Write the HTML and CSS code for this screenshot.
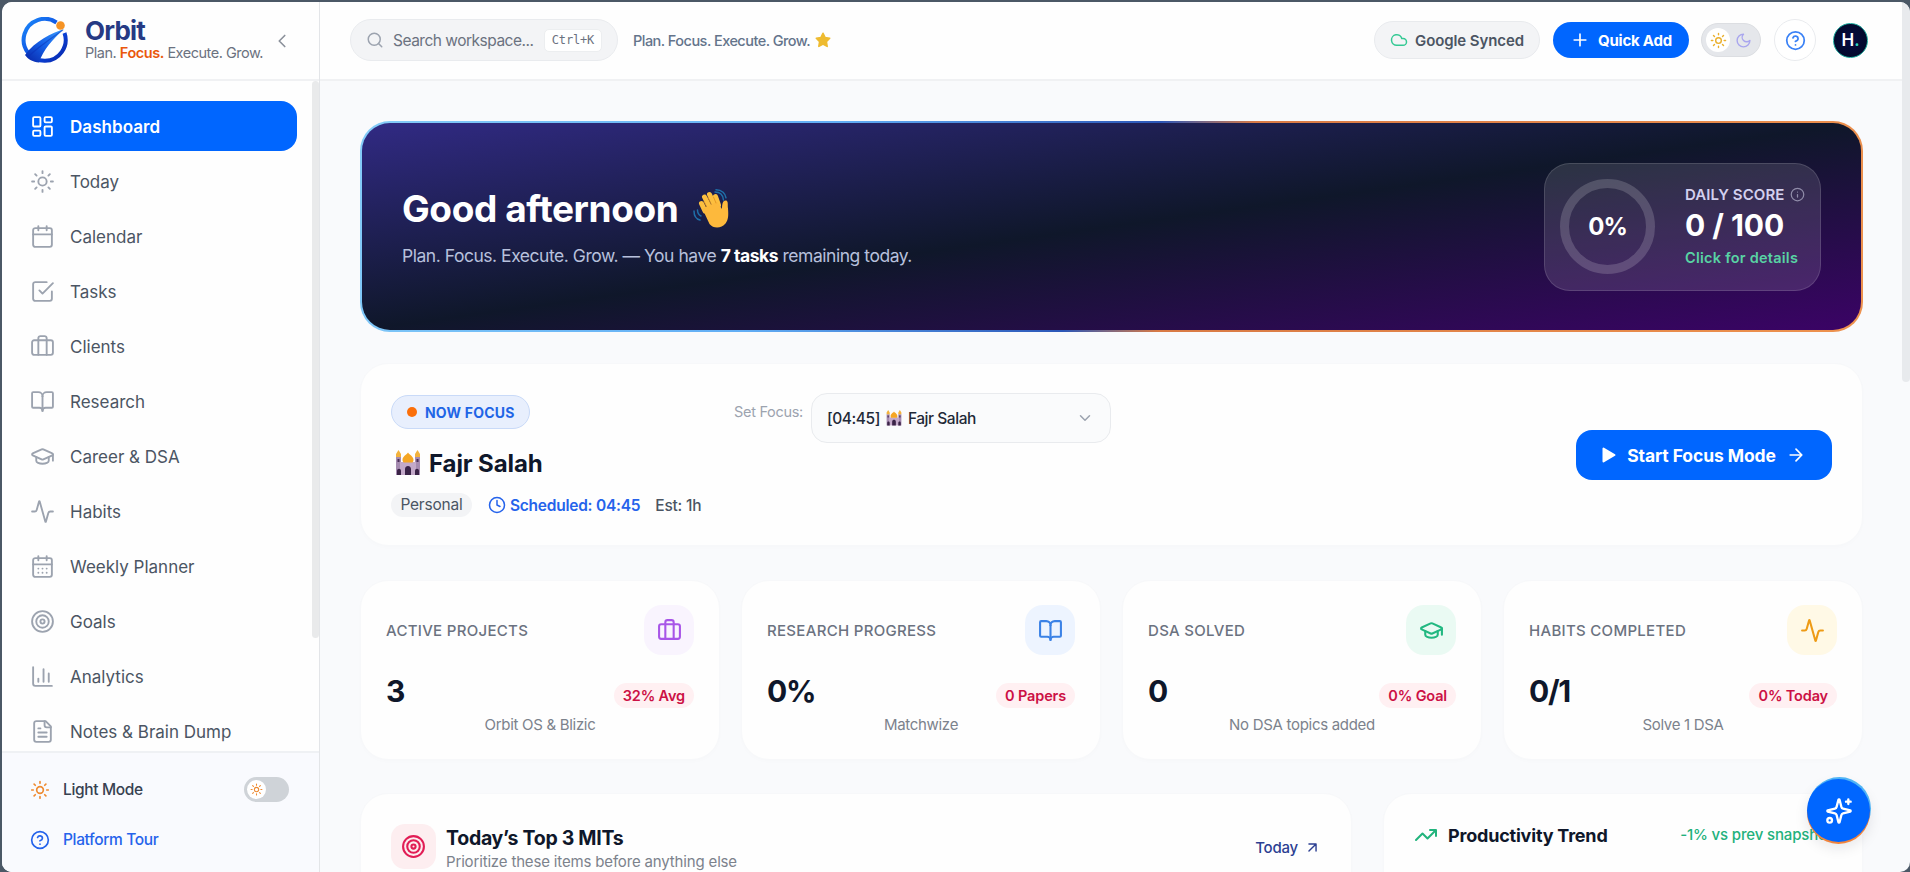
FILE: index.html
```html
<!DOCTYPE html>
<html lang="en">
<head>
    <meta charset="UTF-8">
    <title>Orbit</title>
    <link rel="stylesheet" href="styles.css">
</head>
<body>
    <!-- icons -->
    <svg class="sprite">
        <symbol id="dashboard" viewBox="0 0 24 24"><rect x="3" y="3" width="7" height="9" rx="1"/><rect x="14" y="3" width="7" height="5" rx="1"/><rect x="14" y="12" width="7" height="9" rx="1"/><rect x="3" y="16" width="7" height="5" rx="1"/></symbol>
        <symbol id="sun" viewBox="0 0 24 24"><circle cx="12" cy="12" r="4"/><path d="M12 2v2M12 20v2M4.93 4.93l1.41 1.41M17.66 17.66l1.41 1.41M2 12h2M20 12h2M6.34 17.66l-1.41 1.41M19.07 4.93l-1.41 1.41"/></symbol>
        <symbol id="calendar" viewBox="0 0 24 24"><path d="M8 2v4M16 2v4M3 10h18"/><rect x="3" y="4" width="18" height="18" rx="2"/></symbol>
        <symbol id="planner" viewBox="0 0 24 24"><path d="M8 2v4M16 2v4M3 10h18M8 14h.01M12 14h.01M16 14h.01M8 18h.01M12 18h.01M16 18h.01"/><rect x="3" y="4" width="18" height="18" rx="2"/></symbol>
        <symbol id="check" viewBox="0 0 24 24"><path d="m9 11 3 3L22 4"/><path d="M21 12v7a2 2 0 0 1-2 2H5a2 2 0 0 1-2-2V5a2 2 0 0 1 2-2h11"/></symbol>
        <symbol id="briefcase" viewBox="0 0 24 24"><path d="M16 20V4a2 2 0 0 0-2-2h-4a2 2 0 0 0-2 2v16"/><rect x="2" y="6" width="20" height="14" rx="2"/></symbol>
        <symbol id="book" viewBox="0 0 24 24"><path d="M12 7v14"/><path d="M3 18a1 1 0 0 1-1-1V4a1 1 0 0 1 1-1h5a4 4 0 0 1 4 4 4 4 0 0 1 4-4h5a1 1 0 0 1 1 1v13a1 1 0 0 1-1 1h-6a3 3 0 0 0-3 3 3 3 0 0 0-3-3z"/></symbol>
        <symbol id="cap" viewBox="0 0 24 24"><path d="M21.42 10.922a1 1 0 0 0-.019-1.838L12.83 5.18a2 2 0 0 0-1.66 0L2.6 9.08a1 1 0 0 0 0 1.832l8.57 3.908a2 2 0 0 0 1.66 0z"/><path d="M22 10v6M6 12.5V16a6 3 0 0 0 12 0v-3.5"/></symbol>
        <symbol id="activity" viewBox="0 0 24 24"><path d="M22 12h-2.48a2 2 0 0 0-1.93 1.46l-2.35 8.36a.25.25 0 0 1-.48 0L9.24 2.18a.25.25 0 0 0-.48 0l-2.35 8.36A2 2 0 0 1 4.49 12H2"/></symbol>
        <symbol id="target" viewBox="0 0 24 24"><circle cx="12" cy="12" r="10"/><circle cx="12" cy="12" r="6"/><circle cx="12" cy="12" r="2"/></symbol>
        <symbol id="chart" viewBox="0 0 24 24"><path d="M3 3v16a2 2 0 0 0 2 2h16M18 17V9M13 17V5M8 17v-3"/></symbol>
        <symbol id="file" viewBox="0 0 24 24"><path d="M15 2H6a2 2 0 0 0-2 2v16a2 2 0 0 0 2 2h12a2 2 0 0 0 2-2V7Z"/><path d="M14 2v4a2 2 0 0 0 2 2h4M10 9H8M16 13H8M16 17H8"/></symbol>
        <symbol id="help" viewBox="0 0 24 24"><circle cx="12" cy="12" r="10"/><path d="M9.09 9a3 3 0 0 1 5.83 1c0 2-3 3-3 3M12 17h.01"/></symbol>
        <symbol id="info" viewBox="0 0 24 24"><circle cx="12" cy="12" r="10"/><path d="M12 16v-4M12 8h.01"/></symbol>
        <symbol id="search" viewBox="0 0 24 24"><circle cx="11" cy="11" r="8"/><path d="m21 21-4.3-4.3"/></symbol>
        <symbol id="cloud" viewBox="0 0 24 24"><path d="M17.5 19H9a7 7 0 1 1 6.71-9h1.79a4.5 4.5 0 1 1 0 9Z"/></symbol>
        <symbol id="plus" viewBox="0 0 24 24"><path d="M5 12h14M12 5v14"/></symbol>
        <symbol id="moon" viewBox="0 0 24 24"><path d="M12 3a6 6 0 0 0 9 9 9 9 0 1 1-9-9Z"/></symbol>
        <symbol id="clock" viewBox="0 0 24 24"><circle cx="12" cy="12" r="10"/><path d="M12 6v6l4 2"/></symbol>
        <symbol id="left" viewBox="0 0 24 24"><path d="m15 18-6-6 6-6"/></symbol>
        <symbol id="down" viewBox="0 0 24 24"><path d="m6 9 6 6 6-6"/></symbol>
        <symbol id="right" viewBox="0 0 24 24"><path d="M5 12h14M12 5l7 7-7 7"/></symbol>
        <symbol id="upright" viewBox="0 0 24 24"><path d="M7 7h10v10M7 17 17 7"/></symbol>
        <symbol id="trend" viewBox="0 0 24 24"><path d="m22 7-8.5 8.5-5-5L2 17M16 7h6v6"/></symbol>
        <symbol id="sparkles" viewBox="0 0 24 24"><path d="M9.937 15.5A2 2 0 0 0 8.5 14.063l-6.135-1.582a.5.5 0 0 1 0-.962L8.5 9.936A2 2 0 0 0 9.937 8.5l1.582-6.135a.5.5 0 0 1 .963 0L14.063 8.5A2 2 0 0 0 15.5 9.937l6.135 1.581a.5.5 0 0 1 0 .964L15.5 14.063a2 2 0 0 0-1.437 1.437l-1.582 6.135a.5.5 0 0 1-.963 0z"/><path d="M20 2v4M22 4h-4"/><circle cx="4" cy="20" r="2"/></symbol>
        <symbol id="mosque" viewBox="0 0 26 26">
            <path d="M1 7h5v18H1zM20 7h5v18h-5z" fill="#a58bb0"/>
            <path d="M5 12h16v13H5z" fill="#c3a9c9"/>
            <path d="M3.500 0 6 4v3H1V4zM22.500 0 25 4v3h-5V4z" fill="#f3b23c"/>
            <path d="M13 2.500c1 2 5.500 3.500 5.500 7.500 0 1.500-1 2.500-1 2.500h-9s-1-1-1-2.500c0-4 4.500-5.500 5.500-7.500z" fill="#f5a623"/>
            <path d="M2 25v-4c0-3 4-3 4 0v4zM20 25v-4c0-3 4-3 4 0v4zM10 25v-6c0-4 6-4 6 0v6z" fill="#3a2347"/>
            <path d="M2.500 9h2v3h-2zM21.500 9h2v3h-2z" fill="#4a2f58"/>
        </symbol>
    </svg>

    <div class="app">
        <aside class="sidebar">
            <div class="brand">
                <svg class="logo" viewBox="0 0 48 48">
                    <defs>
                        <linearGradient id="lg" x1="0" y1="0" x2="1" y2="1"><stop offset="0" stop-color="#1d8bfb"/><stop offset="0.600" stop-color="#0b45dd"/><stop offset="1" stop-color="#0826a8"/></linearGradient>
                        <linearGradient id="lt" x1="1" y1="0" x2="0" y2="1"><stop offset="0" stop-color="#3ba0ff"/><stop offset="0.500" stop-color="#1560e8"/><stop offset="1" stop-color="#0824a6"/></linearGradient>
                    </defs>
                    <path d="M35.500 5.500A21 21 0 1 0 43.500 16" fill="none" stroke="url(#lg)" stroke-width="4"/>
                    <path d="M43 12C31 16 14 24 4 38c3 4.500 8 7 14 7.500C22 33 32 22 43 12z" fill="url(#lt)"/>
                    <path d="M42 13C31 21 17 30 7 40" fill="none" stroke="#0a2fb8" stroke-width="1.200" opacity=".5"/>
                    <circle cx="39.500" cy="8.500" r="4.300" fill="#f59324"/>
                </svg>
                <div class="brand-text">
                    <div class="brand-name">Orbit</div>
                    <div class="brand-tag">Plan. <b>Focus.</b> Execute. Grow.</div>
                </div>
                <svg class="icon collapse"><use href="#left"/></svg>
            </div>
            <nav class="nav">
                <a class="active"><svg class="icon"><use href="#dashboard"/></svg>Dashboard</a>
                <a><svg class="icon"><use href="#sun"/></svg>Today</a>
                <a><svg class="icon"><use href="#calendar"/></svg>Calendar</a>
                <a><svg class="icon"><use href="#check"/></svg>Tasks</a>
                <a><svg class="icon"><use href="#briefcase"/></svg>Clients</a>
                <a><svg class="icon"><use href="#book"/></svg>Research</a>
                <a><svg class="icon"><use href="#cap"/></svg>Career &amp; DSA</a>
                <a><svg class="icon"><use href="#activity"/></svg>Habits</a>
                <a><svg class="icon"><use href="#planner"/></svg>Weekly Planner</a>
                <a><svg class="icon"><use href="#target"/></svg>Goals</a>
                <a><svg class="icon"><use href="#chart"/></svg>Analytics</a>
                <a><svg class="icon"><use href="#file"/></svg>Notes &amp; Brain Dump</a>
                <span class="nav-scroll"></span>
            </nav>
            <div class="side-foot">
                <div class="mode">
                    <svg class="icon orange"><use href="#sun"/></svg>
                    <span>Light Mode</span>
                    <div class="switch"><div class="knob"><svg class="icon orange"><use href="#sun"/></svg></div></div>
                </div>
                <div class="tour"><svg class="icon"><use href="#help"/></svg><span>Platform Tour</span></div>
            </div>
        </aside>

        <div class="page">
            <header class="topbar">
                <div class="search">
                    <svg class="icon"><use href="#search"/></svg>
                    <span>Search workspace...</span>
                    <kbd>Ctrl+K</kbd>
                </div>
                <div class="tagline">Plan. Focus. Execute. Grow.</div>
                <svg class="star" viewBox="0 0 24 24"><path d="m12 2 3.100 6.500 6.900.9-5 4.900 1.200 7.200L12 18.200l-6.200 3.300L7 14.300 2 9.400l6.900-.9z" fill="#eebb30" stroke="#eebb30" stroke-width="2.500" stroke-linejoin="round"/></svg>
                <div class="synced"><svg class="icon"><use href="#cloud"/></svg>Google Synced</div>
                <button class="quick"><svg class="icon"><use href="#plus"/></svg>Quick Add</button>
                <div class="theme">
                    <div class="theme-on"><svg class="icon"><use href="#sun"/></svg></div>
                    <svg class="icon moon"><use href="#moon"/></svg>
                </div>
                <div class="help"><svg class="icon"><use href="#help"/></svg></div>
                <div class="avatar">H<i>.</i></div>
            </header>

            <main class="content">
                <section class="hero">
                    <div class="hero-text">
                        <h1>Good afternoon
                            <svg class="wave" viewBox="0 0 38 40">
                                <g fill="none" stroke="#1f6fa8" stroke-width="1.500" stroke-linecap="round"><path d="M2 22c0 5 2 8 6 9M5.500 21c0 3 1.500 5 3.500 6M23 3c5 0 8 3 8.500 8M24 .8c6 0 9.500 4 10 8"/></g>
                                <path d="M13 22 9.500 14.500M17 17 12.500 8M22 15 17.500 5.500M26.500 16 23.500 7.500" fill="none" stroke="#fdbf3f" stroke-width="5" stroke-linecap="round"/>
                                <path d="M10.500 20 25 12.500l5 7.500c0-4 .5-9 4-8.500 2.500.5 1.500 4 2 8 .5 7 .5 11-2.500 15-4 5-12 5.500-16 .5z" fill="#fdb93c"/>
                                <path d="m14.500 17.500-2.500-5M19 15l-3-6.500M24 14l-2.500-6" fill="none" stroke="#e08f1f" stroke-width=".8" stroke-linecap="round"/>
                            </svg>
                        </h1>
                        <p>Plan. Focus. Execute. Grow. — You have <b>7 tasks</b> remaining today.</p>
                    </div>
                    <div class="score">
                        <div class="ring">0%</div>
                        <div class="score-text">
                            <div class="score-label">DAILY SCORE <svg class="icon"><use href="#info"/></svg></div>
                            <div class="score-value">0 / 100</div>
                            <div class="score-link">Click for details</div>
                        </div>
                    </div>
                </section>

                <section class="card focus">
                    <div class="focus-left">
                        <div class="now"><i></i>NOW FOCUS</div>
                        <div class="focus-title"><svg class="mosque"><use href="#mosque"/></svg>Fajr Salah</div>
                        <div class="focus-meta">
                            <span class="chip">Personal</span>
                            <span class="sched"><svg class="icon"><use href="#clock"/></svg>Scheduled: 04:45</span>
                            <span class="est">Est: 1h</span>
                        </div>
                    </div>
                    <div class="set-focus">
                        <label>Set Focus:</label>
                        <div class="select"><span>[04:45]</span><svg class="mosque"><use href="#mosque"/></svg><span>Fajr Salah</span><svg class="icon"><use href="#down"/></svg></div>
                    </div>
                    <button class="start"><svg class="play" viewBox="0 0 14 16"><path d="M1.500 1.500v13L12.500 8z" fill="#fff" stroke="#fff" stroke-width="2" stroke-linejoin="round"/></svg><span>Start Focus Mode</span><svg class="icon"><use href="#right"/></svg></button>
                </section>

                <section class="stats">
                    <div class="card stat">
                        <div class="stat-head"><h3>ACTIVE PROJECTS</h3><div class="tile purple"><svg class="icon"><use href="#briefcase"/></svg></div></div>
                        <div class="stat-row"><strong>3</strong><span class="pill">32% Avg</span></div>
                        <p>Orbit OS &amp; Blizic</p>
                    </div>
                    <div class="card stat">
                        <div class="stat-head"><h3>RESEARCH PROGRESS</h3><div class="tile blue"><svg class="icon"><use href="#book"/></svg></div></div>
                        <div class="stat-row"><strong>0%</strong><span class="pill">0 Papers</span></div>
                        <p>Matchwize</p>
                    </div>
                    <div class="card stat">
                        <div class="stat-head"><h3>DSA SOLVED</h3><div class="tile green"><svg class="icon"><use href="#cap"/></svg></div></div>
                        <div class="stat-row"><strong>0</strong><span class="pill">0% Goal</span></div>
                        <p>No DSA topics added</p>
                    </div>
                    <div class="card stat">
                        <div class="stat-head"><h3>HABITS COMPLETED</h3><div class="tile amber"><svg class="icon"><use href="#activity"/></svg></div></div>
                        <div class="stat-row"><strong>0/1</strong><span class="pill">0% Today</span></div>
                        <p>Solve 1 DSA</p>
                    </div>
                </section>

                <section class="bottom">
                    <div class="card mits">
                        <div class="tile red"><svg class="icon"><use href="#target"/></svg></div>
                        <div class="mits-text">
                            <h2>Today’s Top 3 MITs</h2>
                            <p>Prioritize these items before anything else</p>
                        </div>
                        <a class="today">Today <svg class="icon"><use href="#upright"/></svg></a>
                    </div>
                    <div class="card trend">
                        <svg class="icon"><use href="#trend"/></svg>
                        <h2>Productivity Trend</h2>
                        <span>-1% vs prev snapshot</span>
                    </div>
                </section>
            </main>
        </div>
        <div class="page-scroll"></div>
        <div class="fab"><svg class="icon"><use href="#sparkles"/></svg></div>
    </div>
</body>
</html>
```

FILE: styles.css
```css
*{
    box-sizing: border-box;
}
body{
    margin: 0;
    height: 872px;
    overflow: hidden;
    padding: 2px 0 0 2px;
    background: #4b5866;
    font-family: Inter, "Liberation Sans", sans-serif;
    color: #0f172a;
}
h1, h2, h3, p{
    margin: 0;
}
button{
    border: 0;
    font-family: inherit;
}
.sprite{
    position: absolute;
    width: 0;
    height: 0;
}
.icon{
    width: 24px;
    height: 24px;
    flex: none;
    fill: none;
    stroke: currentColor;
    stroke-width: 2;
    stroke-linecap: round;
    stroke-linejoin: round;
}
.app{
    position: relative;
    display: flex;
    height: 870px;
    border-radius: 10px;
    overflow: hidden;
    background: #f9fafc;
}

/* sidebar */
.sidebar{
    width: 318px;
    flex: none;
    display: flex;
    flex-direction: column;
    background: #fefefe;
    border-right: 1px solid #e3e5e8;
}
.brand{
    height: 79px;
    flex: none;
    display: flex;
    align-items: center;
    padding: 0 26px 0 19px;
    border-bottom: 2px solid #f0f1f3;
}
.logo{
    width: 48px;
    height: 48px;
    margin-right: 16px;
}
.brand-text{
    flex: 1;
    padding-bottom: 5px;
}
.brand-name{
    font-size: 26px;
    line-height: 29px;
    font-weight: 700;
    letter-spacing: -0.8px;
    color: #263a84;
}
.brand-tag{
    font-size: 14.5px;
    line-height: 16px;
    letter-spacing: -0.48px;
    white-space: nowrap;
    color: #6b7280;
}
.brand-tag b{
    font-weight: 600;
    color: #ea580c;
}
.collapse{
    width: 22px;
    height: 22px;
    color: #8b919b;
    stroke-width: 1.8;
}
.nav{
    position: relative;
    flex: 1;
    min-height: 0;
    overflow: hidden;
    padding: 20px 22px 0 13px;
    display: flex;
    flex-direction: column;
    gap: 5px;
}
.nav a{
    height: 50px;
    flex: none;
    display: flex;
    align-items: center;
    gap: 15px;
    padding: 1px 0 0 15px;
    border-radius: 16px;
    font-size: 17px;
    letter-spacing: 0;
    color: #4b5563;
}
.nav a .icon{
    width: 25px;
    height: 25px;
    color: #9ca3af;
    stroke-width: 1.8;
}
.nav .active{
    background: #0066ff;
    color: #fff;
    font-weight: 600;
    letter-spacing: 0.05px;
}
.nav .active .icon{
    color: #fff;
}
.nav-scroll{
    position: absolute;
    top: 0;
    right: 0;
    width: 7px;
    height: 557px;
    border-radius: 4px;
    background: #e9eaeb;
}
.side-foot{
    height: 121px;
    flex: none;
    padding: 24px 30px 0 28px;
    border-top: 2px solid #eff1f4;
    background: #f9fafe;
    font-size: 15.5px;
    font-weight: 500;
    letter-spacing: -0.35px;
}
.mode, .tour{
    display: flex;
    align-items: center;
    height: 25px;
    color: #374151;
}
.mode span, .tour span{
    margin-left: 13px;
}
.side-foot .icon{
    width: 20px;
    height: 20px;
}
.side-foot .orange{
    color: #ee8a30;
}
.switch{
    width: 45px;
    height: 25px;
    margin-left: auto;
    padding: 3px;
    border-radius: 13px;
    background: #cfd3d8;
}
.knob{
    width: 19px;
    height: 19px;
    display: flex;
    align-items: center;
    justify-content: center;
    border-radius: 50%;
    background: #fff;
}
.side-foot .knob .icon{
    width: 13px;
    height: 13px;
}
.tour{
    margin-top: 25px;
    color: #2563eb;
}

/* top bar */
.page{
    flex: 1;
    min-width: 0;
    display: flex;
    flex-direction: column;
}
.topbar{
    height: 79px;
    flex: none;
    display: flex;
    align-items: center;
    padding: 0 34px 1px 30px;
    background: #fefefe;
    border-bottom: 2px solid #f0f1f3;
}
.search{
    width: 268px;
    height: 42px;
    display: flex;
    align-items: center;
    padding: 0 15px;
    border: 1px solid #e9ebee;
    border-radius: 21px;
    background: #f3f4f6;
    font-size: 15.5px;
    letter-spacing: -0.5px;
    color: #6b7280;
}
.search .icon{
    width: 18px;
    height: 18px;
    margin-right: 9px;
    color: #9ca3af;
}
.search kbd{
    margin-left: auto;
    padding: 3px 7px;
    border: 1px solid #eceef0;
    border-radius: 5px;
    background: #fff;
    font: 12px/15px "DejaVu Sans Mono", monospace;
    letter-spacing: -0.2px;
}
.tagline{
    margin-left: 15px;
    font-size: 14.5px;
    font-weight: 500;
    letter-spacing: -0.53px;
    color: #64748b;
}
.star{
    width: 16px;
    height: 16px;
    margin-left: 5px;
}
.synced{
    width: 166px;
    height: 38px;
    margin-left: auto;
    display: flex;
    align-items: center;
    justify-content: center;
    gap: 7px;
    border: 1px solid #e8eaed;
    border-radius: 19px;
    background: #f3f4f6;
    font-size: 15px;
    font-weight: 600;
    letter-spacing: -0.1px;
    color: #4b5563;
}
.synced .icon{
    width: 18px;
    height: 18px;
    color: #34c994;
}
.quick{
    width: 136px;
    height: 36px;
    margin-left: 13px;
    display: flex;
    align-items: center;
    justify-content: center;
    gap: 8px;
    border-radius: 18px;
    background: #0066ff;
    color: #fff;
    font-size: 15px;
    font-weight: 700;
    letter-spacing: -0.2px;
}
.quick .icon{
    width: 20px;
    height: 20px;
}
.theme{
    width: 60px;
    height: 34px;
    margin-left: 12px;
    display: flex;
    align-items: center;
    justify-content: space-between;
    padding: 0 8px 0 4px;
    border: 1px solid #dcdee2;
    border-radius: 17px;
    background: #e5e7eb;
}
.theme-on{
    width: 24px;
    height: 24px;
    display: flex;
    align-items: center;
    justify-content: center;
    border-radius: 50%;
    background: #fff;
    color: #eab02e;
}
.theme .icon{
    width: 17px;
    height: 17px;
}
.theme .moon{
    color: #a9a6ee;
}
.help{
    width: 42px;
    height: 42px;
    margin-left: 13px;
    display: flex;
    align-items: center;
    justify-content: center;
    border: 1px solid #e9ebee;
    border-radius: 50%;
    background: #fff;
    color: #3b82f6;
}
.help .icon{
    width: 21px;
    height: 21px;
}
.avatar{
    width: 35px;
    height: 35px;
    margin-left: 17px;
    border: 1px solid #1ba89c;
    border-radius: 50%;
    background: radial-gradient(#050b40, #020824);
    color: #fff;
    font-size: 17px;
    line-height: 33px;
    font-weight: 600;
    text-align: center;
}
.avatar i{
    font-style: normal;
    color: #2dd4bf;
}
.page-scroll{
    width: 8px;
    height: 380px;
    flex: none;
    background: #e8eaed;
    border-radius: 0 0 4px 4px;
}

/* content */
.content{
    padding: 40px 39px 0 40px;
}
.card{
    background: #fefefe;
    border: 1px solid #f7f8fa;
    border-radius: 28px;
    box-shadow: 0 2px 4px rgba(15, 23, 42, 0.012);
}
.hero{
    height: 211px;
    display: flex;
    align-items: center;
    justify-content: space-between;
    padding: 0 40px 0 40px;
    border: 2px solid transparent;
    border-radius: 30px;
    background: linear-gradient(to bottom right, #312a84, #0f172a 50%, #3b0366) padding-box,
                linear-gradient(115deg, #85ccf8, #62aef5 30%, #2c57b8 50%, #d97a45 56%, #ee924e) border-box;
    color: #fff;
}
.hero h1{
    display: flex;
    align-items: center;
    gap: 14px;
    height: 46px;
    font-size: 37px;
    font-weight: 700;
    letter-spacing: -0.4px;
}
.wave{
    width: 38px;
    height: 40px;
}
.hero p{
    margin-top: 12px;
    font-size: 17.5px;
    line-height: 24px;
    letter-spacing: -0.47px;
    color: #b7c0dc;
}
.hero p b{
    font-weight: 700;
    color: #fff;
}
.score{
    width: 277px;
    height: 128px;
    display: flex;
    align-items: center;
    padding-left: 15px;
    border: 1px solid rgba(255, 255, 255, 0.13);
    border-radius: 26px;
    background: rgba(255, 255, 255, 0.12);
}
.ring{
    width: 95px;
    height: 95px;
    margin-right: 30px;
    border: 9px solid rgba(255, 255, 255, 0.17);
    border-radius: 50%;
    font-size: 24px;
    line-height: 78px;
    font-weight: 700;
    letter-spacing: -1px;
    text-align: center;
}
.score-label{
    display: flex;
    align-items: center;
    gap: 5px;
    font-size: 15px;
    line-height: 20px;
    font-weight: 600;
    letter-spacing: 0.1px;
    color: #d3d0ee;
}
.score-label .icon{
    width: 15px;
    height: 15px;
    color: #8f8ba8;
}
.score-value{
    font-size: 30px;
    line-height: 40px;
    font-weight: 700;
    letter-spacing: -0.05px;
}
.score-link{
    margin-top: 2px;
    font-size: 14.5px;
    line-height: 22px;
    font-weight: 600;
    letter-spacing: 0.25px;
    color: #58d3a4;
}

/* focus card */
.focus{
    height: 183px;
    margin-top: 31px;
    display: flex;
    padding: 0 30px 0 30px;
}
.focus-left{
    width: 313px;
    padding-top: 31px;
}
.now{
    width: 139px;
    height: 34px;
    display: flex;
    align-items: center;
    gap: 8px;
    padding-left: 15px;
    border: 1px solid #c9daf8;
    border-radius: 17px;
    background: #e8effd;
    color: #1f65e6;
    font-size: 14px;
    font-weight: 700;
    letter-spacing: 0.2px;
}
.now i{
    width: 10px;
    height: 10px;
    border-radius: 50%;
    background: #fb6f0a;
}
.focus-title{
    display: flex;
    align-items: center;
    gap: 8px;
    height: 34px;
    margin: 17px 0 0 4px;
    font-size: 24px;
    font-weight: 700;
    letter-spacing: -0.1px;
}
.mosque{
    width: 26px;
    height: 26px;
}
.focus-meta{
    display: flex;
    align-items: center;
    height: 24px;
    margin-top: 13px;
    font-size: 15.5px;
    letter-spacing: -0.2px;
    white-space: nowrap;
    color: #4b5563;
}
.chip{
    width: 81px;
    line-height: 24px;
    text-align: center;
    border-radius: 12px;
    background: #f3f4f6;
}
.sched{
    display: flex;
    align-items: center;
    gap: 4px;
    margin-left: 16px;
    color: #2563eb;
    font-weight: 600;
    letter-spacing: -0.25px;
}
.sched .icon{
    width: 18px;
    height: 18px;
}
.est{
    margin-left: 15px;
    font-weight: 500;
}
.set-focus{
    display: flex;
    align-items: flex-start;
    padding: 29px 0 0 30px;
}
.set-focus label{
    width: 77px;
    padding-top: 10px;
    font-size: 14.5px;
    line-height: 18px;
    letter-spacing: -0.3px;
    color: #9ca3af;
}
.select{
    width: 300px;
    height: 50px;
    display: flex;
    align-items: center;
    gap: 6px;
    padding: 0 16px 0 15px;
    border: 1px solid #e9ebee;
    border-radius: 16px;
    background: #fafbfc;
    font-size: 15.5px;
    font-weight: 500;
    letter-spacing: -0.45px;
    color: #1f2937;
}
.select .mosque{
    width: 16px;
    height: 16px;
}
.select .icon{
    width: 18px;
    height: 18px;
    margin-left: auto;
    color: #9ca3af;
}
.start{
    width: 256px;
    height: 50px;
    margin: 66px 0 0 auto;
    display: flex;
    align-items: center;
    justify-content: center;
    border-radius: 16px;
    background: #0066ff;
    color: #fff;
    font-size: 17.5px;
    font-weight: 700;
    letter-spacing: -0.1px;
}
.play{
    width: 14px;
    height: 16px;
    margin-right: 11px;
}
.start .icon{
    width: 20px;
    height: 20px;
    margin-left: 10px;
}

/* stats */
.stats{
    margin-top: 34px;
    display: grid;
    grid-template-columns: repeat(4, 1fr);
    gap: 21px;
}
.stat{
    height: 180px;
    padding: 24px 25px 0;
}
.stat-head{
    display: flex;
    align-items: center;
    justify-content: space-between;
}
.stat h3{
    font-size: 15px;
    font-weight: 500;
    letter-spacing: 0.3px;
    color: #6b7280;
}
.tile{
    width: 50px;
    height: 50px;
    flex: none;
    display: flex;
    align-items: center;
    justify-content: center;
    border-radius: 18px;
}
.tile .icon{
    width: 25px;
    height: 25px;
}
.purple{
    background: #f9f4fe;
    color: #a855e8;
}
.blue{
    background: #edf4ff;
    color: #3b82e6;
}
.green{
    background: #eafaf3;
    color: #22b881;
}
.amber{
    background: #fff9e6;
    color: #ee9b16;
}
.red{
    width: 45px;
    height: 45px;
    border-radius: 14px;
    background: #fdeef0;
    color: #e11d55;
}
.stat-row{
    display: flex;
    justify-content: space-between;
    height: 40px;
    margin-top: 16px;
}
.stat strong{
    font-size: 30px;
    line-height: 40px;
    letter-spacing: -1.3px;
}
.pill{
    align-self: flex-start;
    height: 25px;
    margin-top: 12px;
    padding: 0 9px;
    border-radius: 13px;
    background: #fff0f2;
    color: #cc1145;
    font-size: 14.5px;
    line-height: 25px;
    font-weight: 600;
    letter-spacing: -0.15px;
}
.stat p{
    margin-top: 4px;
    font-size: 15px;
    line-height: 20px;
    letter-spacing: -0.3px;
    text-align: center;
    color: #7c828c;
}

/* bottom row */
.bottom{
    margin-top: 33px;
    display: flex;
    gap: 31px;
}
.bottom .card{
    height: 200px;
    display: flex;
}
.mits{
    width: 992px;
    padding: 30px 30px 0 30px;
}
.mits-text{
    margin-left: 10px;
}
.mits h2{
    font-size: 19.5px;
    line-height: 28px;
    font-weight: 700;
    letter-spacing: -0.28px;
}
.mits p{
    font-size: 15px;
    line-height: 20px;
    letter-spacing: -0.16px;
    color: #7c828c;
}
.today{
    height: 22px;
    margin: 12px 0 0 auto;
    display: flex;
    align-items: center;
    gap: 6px;
    font-size: 15px;
    font-weight: 500;
    letter-spacing: -0.2px;
    color: #2c3f92;
}
.today .icon{
    width: 17px;
    height: 17px;
}
.trend{
    flex: 1;
    padding: 29px 30px 0 30px;
}
.trend .icon{
    color: #22b47d;
}
.trend h2{
    margin-left: 10px;
    font-size: 18px;
    line-height: 26px;
    font-weight: 700;
    letter-spacing: -0.2px;
    white-space: nowrap;
}
.trend span{
    margin-left: auto;
    font-size: 15px;
    line-height: 24px;
    font-weight: 500;
    letter-spacing: -0.15px;
    white-space: nowrap;
    color: #22b17c;
}
.fab{
    position: absolute;
    right: 40px;
    bottom: 30px;
    width: 63px;
    height: 63px;
    display: flex;
    align-items: center;
    justify-content: center;
    border-radius: 50%;
    background: #0066ff;
    box-shadow: 0 2px 0 #f2843c, 1px -2px 0 #4fb4f5, 0 6px 14px rgba(15, 23, 42, 0.1);
    color: #fff;
}
.fab .icon{
    width: 28px;
    height: 28px;
}
```
